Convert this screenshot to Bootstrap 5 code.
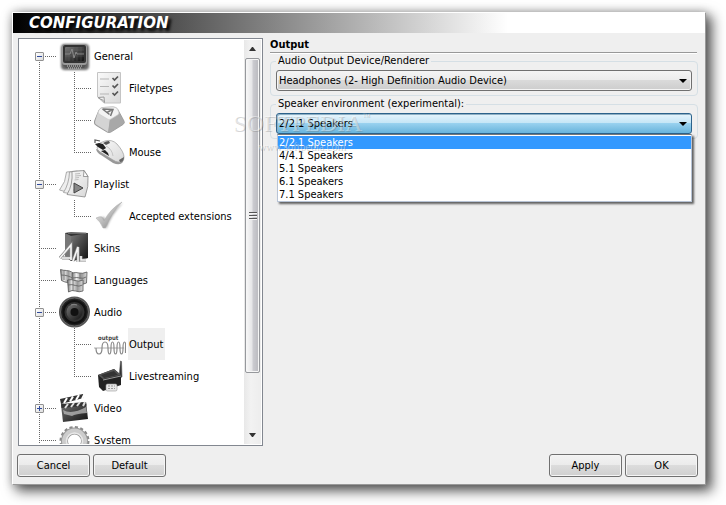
<!DOCTYPE html>
<html lang="en">
<head>
<meta charset="utf-8">
<meta name="viewport" content="width=device-width, initial-scale=1">
<title>Configuration</title>
<link href="https://cdn.jsdelivr.net/npm/bootstrap@5.3.0/dist/css/bootstrap.min.css" rel="stylesheet">
<style>
body{font-family:"DejaVu Sans Condensed","Noto Sans",sans-serif;font-size:11px;line-height:14px;color:#000;background:#fff;padding:12px 20px 20px 12px}
.win{background:#efefef;border:1px solid;border-color:#fff #999 #999 #fff;box-shadow:5px 5px 12px 1px rgba(0,0,0,.65),0 0 9px rgba(0,0,0,.22)}
.win-title{height:20px;margin:0;padding-left:16px;background:linear-gradient(90deg,#000 0,#858585 260px,#fff 495px);color:#fff;font:italic bold 15px/20px "DejaVu Sans",sans-serif;text-shadow:3px 3px 3px #000}
.work{padding:5px 7px 0 5px;gap:7px}
.tree-box{width:245px;flex:none;border:1px solid #828790;background:#fff;padding:1px;min-height:0}
.tree-view{min-width:0;min-height:0}
.tree-view ul{list-style:none;margin:0;padding:0}
.node{height:32px}
.node svg{width:32px;height:32px;flex:none;margin-right:2px}
.node a{color:#000;text-decoration:none;line-height:34px;height:32px;padding:0 2px 0 1px;white-space:nowrap}
.node a.current{background:#efefef}
.rail,.branch{flex:none;height:32px;--v:repeating-linear-gradient(180deg,#666 0 1px,#fff 1px 2px);--h:repeating-linear-gradient(90deg,#666 0 1px,#fff 1px 2px);background-repeat:no-repeat}
.rail{width:39px;background-image:var(--v);background-size:1px 32px;background-position:19px 0;padding-left:15px}
.rail.stop{background-image:var(--v),var(--h);background-size:1px 32px,18px 1px;background-position:19px 0,19px 16px}
.rail.first{background-size:1px 16px,18px 1px;background-position:19px 16px,19px 16px}
.branch{width:35px;background-image:var(--v),var(--h);background-size:1px 32px,18px 1px;background-position:15px 0,15px 16px}
.branch.end{background-size:1px 16px,18px 1px}
.expander{width:9px;height:9px;padding:0;border:1px solid #919191;border-radius:1px;background:linear-gradient(135deg,#fff,#ddd);position:relative}
.expander::before,.expander.plus::after{content:"";position:absolute;left:1px;top:3px;width:5px;height:1px;background:#2f4a9c}
.expander.plus::after{left:3px;top:1px;width:1px;height:5px}
.scroll{width:17px;flex:none;background:linear-gradient(90deg,#e8e8e8,#f2f2f2 40%,#ededed)}
.scroll button{border:0;background:none;padding:0;height:18px}
.arrow{display:block;margin:auto;width:7px;border:solid transparent;border-width:0 3px 4px;border-bottom-color:#333}
.arrow.down{border-width:4px 3px 0;border-top-color:#333}
.thumb{flex:0 0 78%;width:15px;border:1px solid #96989c;border-radius:2px;background:linear-gradient(90deg,#f8f8f8,#e6e6e8 45%,#cbcbd0 55%,#b9b9be);box-shadow:inset 0 0 0 1px #f6f6f6}
.grip{width:8px;height:8px;background:repeating-linear-gradient(180deg,#555 0 1px,#f4f4f4 1px 2px,transparent 2px 3px)}
.pane{min-width:0}
.pane h2{font-size:11px;font-weight:bold;line-height:14px;margin:0 1px 1px 0;border-bottom:1px solid #999;box-shadow:0 1px #fff;font-family:"DejaVu Sans Condensed",sans-serif}
.group{border:1px solid #d5dfe5;border-radius:4px;padding:2px 5px 4px;margin:0 0 1px;position:relative}
.group legend{float:none;width:auto;font-size:11px;line-height:14px;margin:0;padding:0 2px}
.combo{appearance:none;display:block;width:100%;height:21px;border:1px solid #707070;border-radius:3px;padding:0 20px 0 2px;font:inherit;color:#000;background:linear-gradient(#f4f4f4,#ebebeb 49%,#dadada 50%,#cdcdcd);box-shadow:inset 0 0 0 1px #f4f4f4}
.combo.open{border-color:#2c628b;background:linear-gradient(#e5f4fc,#c4e5f6 49%,#98d1ef 50%,#68b3db);box-shadow:inset 1px 1px #8fb0c4}
.combo-wrap{position:relative}
.combo-wrap::after{content:"";position:absolute;right:5px;top:9px;border:solid transparent;border-width:4px 4px 0;border-top-color:#000;pointer-events:none}
.combo-list{--bs-dropdown-min-width:0;left:1px;right:0;top:21px;padding:1px 0 0;margin:0;border:1px solid #b8c4d6;border-top-color:#777;border-radius:0;background:#fff;font-size:11px;color:#000;box-shadow:2px 2px 2px rgba(0,0,0,.6)}
.combo-list .dropdown-item{padding:0 0 0 1px;line-height:13px;height:13px;color:#000;font-size:11px}
.combo-list .dropdown-item.active{background:#39f;color:#fff}
.actions{padding:8px 7px 7px 4px;gap:3px}
.actions .btn{width:73px;height:23px;padding:0;font-size:11px;line-height:14px;color:#000;border:1px solid #707070;border-radius:3px;background:linear-gradient(#f3f3f3,#ebebeb 49%,#dcdcdc 50%,#cfcfcf);box-shadow:inset 0 0 0 1px #f5f5f5}
.stamp{position:absolute;left:233px;top:110px;z-index:1100;pointer-events:none;color:rgba(255,255,255,.4);text-shadow:1px 1px 0 rgba(110,110,110,.3);font:24px/26px "Liberation Serif",serif;text-align:center}
.stamp sup{font-size:8px;top:-12px}
.stamp small{display:block;font:11px/20px "Liberation Serif",serif}
</style>
<script src="https://cdn.jsdelivr.net/npm/bootstrap@5.3.0/dist/js/bootstrap.bundle.min.js"></script>
</head>
<body class="vh-100 overflow-hidden">
<svg width="0" height="0" class="position-absolute" aria-hidden="true">
<defs>
<linearGradient id="paper" x1="0" y1="0" x2="1" y2="1"><stop offset="0" stop-color="#fafafa"/><stop offset="1" stop-color="#d8d8d8"/></linearGradient>
<linearGradient id="dark" x1="0" y1="0" x2="1" y2="1"><stop offset="0" stop-color="#777"/><stop offset="1" stop-color="#111"/></linearGradient>
<linearGradient id="steel" x1="0" y1="0" x2="1" y2="1"><stop offset="0" stop-color="#f4f4f4"/><stop offset=".5" stop-color="#bbb"/><stop offset="1" stop-color="#777"/></linearGradient>
<linearGradient id="flag" x1="0" y1="0" x2="1" y2="0"><stop offset="0" stop-color="#777"/><stop offset=".3" stop-color="#eee"/><stop offset=".65" stop-color="#999"/><stop offset="1" stop-color="#ddd"/></linearGradient>
<filter id="haze" x="-20%" y="-20%" width="140%" height="140%"><feGaussianBlur stdDeviation="1"/></filter>
</defs></svg>
<div class="win d-flex flex-column h-100">
<h1 class="win-title">CONFIGURATION</h1>
<main class="work d-flex flex-grow-1 overflow-hidden">
<nav class="tree-box d-flex" aria-label="Settings">
<div class="tree-view flex-grow-1 overflow-hidden">
<ul>
<li>
<div class="node d-flex"><span class="rail stop first d-flex align-items-center"><button class="expander" aria-label="Collapse General"></button></span>
<svg viewBox="0 0 32 32"><rect x="2" y="4" width="28" height="26" rx="4" fill="#000" opacity=".6" filter="url(#haze)"/><rect x="3" y="4" width="25" height="21" rx="3" fill="#999"/><rect x="4" y="5" width="23" height="18" rx="2" fill="#333"/><rect x="6" y="7" width="19" height="14" rx="1" fill="url(#dark)"/><path d="M6 10h19M6 13h19M6 16h19M10 7v14M14 7v14M18 7v14M22 7v14" stroke="#777" stroke-width=".5" opacity=".6"/><path d="M6 14h5l2-5 2 9 2-6 1 2h7" fill="none" stroke="#888" stroke-width="1"/><path d="M4 25h23l-2 3H7z" fill="#555"/><path d="M8 26h16M9 28h14" stroke="#ccc" stroke-dasharray="1 1"/></svg>
<a href="#general">General</a></div>
<ul>
<li class="node d-flex"><span class="rail"></span><span class="branch"></span>
<svg viewBox="0 0 32 32"><path d="M3.500.5h23v30.500H10l-6.500-6z" fill="url(#paper)" stroke="#c4c4c4"/><path d="M4 25.500l6-.5.500 5.500c-1-2-2-3-3.500-3z" fill="#eee" stroke="#999"/><path d="M6 7h9M6 14.500h9M6 22h9" stroke="#b5b5b5"/><path d="M18.500 6l2 2 3.500-3.500M18.500 13.500l2 2 3.500-3.500M18.500 21l2 2 3.500-3.500" fill="none" stroke="#555" stroke-width="1.700"/></svg>
<a href="#filetypes">Filetypes</a></li>
<li class="node d-flex"><span class="rail"></span><span class="branch"></span>
<svg viewBox="0 0 32 32"><path d="M5 6q1-2 4-2.500l10-.5q3 0 4.500 2L30 17q1 2-1 3.500L17 28q-2 1-4 0L1.500 21Q-.5 19.500.5 17z" fill="#aaa" stroke="#888" stroke-width=".7"/><path d="M4 8L1 18q0 2 2 3l11 7 2-13z" fill="#d4d4d4"/><path d="M16 15l-1.500 13h2L29 20q1.500-1 .5-3L24 7z" fill="#a8a8a8"/><path d="M5 6q1-2 4-2.500l10-.5q3 0 4.500 2l1.500 4q0 1-1.500 2L17 15q-2 1-3.500 0L5 10q-1.500-1.500 0-4z" fill="#f3f3f3" stroke="#ccc" stroke-width=".7"/><path d="M8.500 5l10.500.5-2.500 6.500M8.500 5l7 5.500M13 8.500l4.500-2.500" fill="none" stroke="#777" stroke-width="1.500"/></svg>
<a href="#shortcuts">Shortcuts</a></li>
<li class="node d-flex"><span class="rail"></span><span class="branch end"></span>
<svg viewBox="0 0 32 32"><path d="M2 13q1 4 5 6l12 8q7 3 10-1l1-6z" fill="#999"/><path d="M3 11Q5 6 11 5q7-2 12 3 7 8 7 13 0 6-6 5-2 0-5-2L6 16q-3-2-3-5z" fill="url(#paper)" stroke="#999" stroke-width=".7"/><path d="M1 8l4-1 4 1 3 4-3 2-5-3zM7 15l4-1 3 3 1 3z" fill="#222"/><path d="M9 7q3-2 6-2l1 2-4 2z" fill="#555"/><path d="M6 5L1 4v3" fill="none" stroke="#555" stroke-width="1.200"/><path d="M12 10q6 3 7 10" fill="none" stroke="#bbb" stroke-width=".8"/><path d="M25 24l5-3q0 5-4 5z" fill="#666"/></svg>
<a href="#mouse">Mouse</a></li>
</ul>
</li>
<li>
<div class="node d-flex"><span class="rail stop d-flex align-items-center"><button class="expander" aria-label="Collapse Playlist"></button></span>
<svg viewBox="0 0 32 32"><path d="M7.500 4l11-1-4 23L.5 22Q7 14 7.500 4z" fill="#eee" stroke="#999" stroke-width=".8"/><path d="M10.500 4l12-1-4 24-14-2.500Q10 16 10.500 4z" fill="#eee" stroke="#999" stroke-width=".8"/><path d="M13 3.500l12-1 4 6q1 10-3 20.500L8 26.500Q14 17 13 3.500z" fill="url(#paper)" stroke="#888" stroke-width=".8"/><path d="M25 2.500l-.5 6H29z" fill="#fff" stroke="#777" stroke-width=".7"/><path d="M16 6l5-.5M16 8l6-.5M16 10l4-.5M15.500 12l4-.5M14 22h3" stroke="#bbb"/><path d="M15 15l9 5-9 5z" fill="#888" stroke="#444"/></svg>
<a href="#playlist">Playlist</a></div>
<ul>
<li class="node d-flex"><span class="rail"></span><span class="branch end"></span>
<svg viewBox="0 0 32 32"><path d="M3 19l6 2 3 8q6-16 17-26-11 6-17 18l-2-4z" fill="#777" filter="url(#haze)" opacity=".7"/><path d="M2 18q4-2 6-1l2 4Q16 9 28 2 17 13 11.500 28L9 28Q6 21 2 18z" fill="url(#steel)" stroke="#aaa" stroke-width=".5"/></svg>
<a href="#extensions">Accepted extensions</a></li>
</ul>
</li>
<li>
<div class="node d-flex"><span class="rail stop"></span>
<svg viewBox="0 0 32 32"><path d="M6 1l6-1 17 1v25l-17 3-6-5z" fill="#333"/><path d="M12 4l17-3v25l-17 3z" fill="url(#dark)"/><path d="M6 1l6 3v25l-6-5z" fill="#777"/><path d="M9 1h18" stroke="#999"/><path d="M1 26l11-13v15M14 29l5-14v15M3 26h9M22 24v4h5" fill="none" stroke="#888" stroke-width="3"/><path d="M1 26l11-13v15M14 29l5-14v15M3 26h9M22 24v4h5" fill="none" stroke="#f6f6f6" stroke-width="1.600"/></svg>
<a href="#skins">Skins</a></div>
</li>
<li>
<div class="node d-flex"><span class="rail stop"></span>
<svg viewBox="0 0 32 32"><g stroke="#555" stroke-width=".8"><path d="M1.500 5.500q3 1 6 1t6 2v11q-3-1-5-1t-6-2z" fill="url(#flag)"/><path d="M13 9q4-1 7 0t8-1l-.500 11q-4 2-7.500 1t-7 0z" fill="url(#flag)"/><path d="M8.500 16q4-1 7.500.5t8-.5v11q-4 1.500-7.500 0t-7 1z" fill="url(#flag)"/></g><path d="M2 11q4 0 7 1t4 2M5 6v10M14 14q4-1 7 0t6-1M21 9v6M9 21q4-1 7.500.5t7-.5M14 16v11" fill="none" stroke="#666" stroke-width=".9"/></svg>
<a href="#languages">Languages</a></div>
</li>
<li>
<div class="node d-flex"><span class="rail stop d-flex align-items-center"><button class="expander" aria-label="Collapse Audio"></button></span>
<svg viewBox="0 0 32 32"><circle cx="15.500" cy="16" r="15.500" fill="#555"/><circle cx="15.500" cy="16" r="14" fill="#222" stroke="#888" stroke-width=".6"/><circle cx="15.500" cy="16" r="11" fill="#333" stroke="#111" stroke-width="2"/><circle cx="15.500" cy="16" r="8" fill="url(#dark)"/><circle cx="15.500" cy="16" r="4" fill="#111"/><path d="M12 9q3-1.500 6 0" fill="none" stroke="#888"/></svg>
<a href="#audio">Audio</a></div>
<ul>
<li class="node d-flex"><span class="rail"></span><span class="branch"></span>
<svg viewBox="0 0 32 32"><text x="4" y="12" font-family="DejaVu Sans Condensed, sans-serif" font-size="6" font-weight="bold" fill="#444">output</text><path d="M0 20h30" stroke="#999" stroke-width=".8"/><path d="M2 20q0 6 3 6t3-6 3-6 3 6 1.500 6 1.500-6 1.500-6 1.500 6 1.500 6 1.500-6 1.500-6 1.500 6 1.500 6 1.500-6 1.500-6 1 6v5" fill="none" stroke="#888" stroke-width="1.200"/></svg>
<a href="#output" class="current" aria-current="page">Output</a></li>
<li class="node d-flex"><span class="rail"></span><span class="branch end"></span>
<svg viewBox="0 0 32 32"><path d="M25 18L26.500 1l1 .5L28 17z" fill="#333" stroke="#555" stroke-width=".6"/><path d="M4 15l16-6 7 6v10l-18 6-4-4z" fill="#222"/><path d="M4 15l16-6 7 6-18 4z" fill="#555"/><path d="M7 15l13-4 4 4-14 3z" fill="#333"/><path d="M9 20l18-4" stroke="#999"/><rect x="12" y="24" width="11" height="7" rx="1.500" fill="#e8e8e8" stroke="#999" stroke-width=".6"/><path d="M14 26h7M14 28.500h7" stroke="#999" stroke-dasharray="2 1"/></svg>
<a href="#livestreaming">Livestreaming</a></li>
</ul>
</li>
<li>
<div class="node d-flex"><span class="rail stop d-flex align-items-center"><button class="expander plus" aria-label="Expand Video"></button></span>
<svg viewBox="0 0 32 32"><path d="M1 7l23-5 .5 4L2 12z" fill="#333"/><path d="M5 11l3-5M11 9.500l3-5M17 8l3-5M23 7l2-4" stroke="#fff" stroke-width="2"/><path d="M2 13l25-3 2 17-25 3z" fill="url(#dark)"/><path d="M2 12l25-2 .5 3.500L2.500 16z" fill="#333"/><path d="M6 16l3-4M12 15l3-4M18 14l3-4M24 14l2-4" stroke="#ddd" stroke-width="2"/><path d="M4 18q9 5 23-3l1 6q-12 1-15 3l-8-2z" fill="#bbb" opacity=".75"/></svg>
<a href="#video">Video</a></div>
</li>
<li>
<div class="node d-flex"><span class="rail stop"></span>
<svg viewBox="0 0 32 32"><circle cx="15.500" cy="17" r="13.500" fill="none" stroke="#888" stroke-width="3" stroke-dasharray="3 2.300"/><circle cx="15.500" cy="17" r="10" fill="none" stroke="#999" stroke-width="7"/><circle cx="15.500" cy="17" r="10" fill="none" stroke="#ccc" stroke-width="5"/><circle cx="15.500" cy="17" r="8" fill="none" stroke="#e8e8e8" stroke-width="1.500"/></svg>
<a href="#system">System</a></div>
</li>
</ul>
</div>
<div class="scroll d-flex flex-column align-items-center">
<button aria-label="Scroll up"><span class="arrow"></span></button>
<div class="thumb d-flex align-items-center justify-content-center"><span class="grip"></span></div>
<button class="mt-auto" aria-label="Scroll down"><span class="arrow down"></span></button>
</div>
</nav>
<section class="pane flex-grow-1">
<h2>Output</h2>
<fieldset class="group"><legend><label for="device">Audio Output Device/Renderer</label></legend>
<div class="combo-wrap"><select class="combo" id="device"><option>Headphones (2- High Definition Audio Device)</option></select></div>
</fieldset>
<fieldset class="group"><legend><label for="speakers">Speaker environment (experimental):</label></legend>
<div class="combo-wrap"><select class="combo open" id="speakers"><option>2/2.1 Speakers</option><option>4/4.1 Speakers</option><option>5.1 Speakers</option><option>6.1 Speakers</option><option>7.1 Speakers</option></select>
<div class="combo-list dropdown-menu show" role="listbox" aria-label="Speaker environment">
<button class="dropdown-item active" role="option" aria-selected="true">2/2.1 Speakers</button>
<button class="dropdown-item" role="option">4/4.1 Speakers</button>
<button class="dropdown-item" role="option">5.1 Speakers</button>
<button class="dropdown-item" role="option">6.1 Speakers</button>
<button class="dropdown-item" role="option">7.1 Speakers</button>
</div></div>
</fieldset>
</section>
</main>
<footer class="actions d-flex">
<button class="btn">Cancel</button><button class="btn">Default</button>
<button class="btn ms-auto">Apply</button><button class="btn">OK</button>
</footer>
</div>
<div class="stamp" aria-hidden="true">SOFTPEDIA<sup>™</sup><small>www.softpedia.com</small></div>
</body>
</html>
